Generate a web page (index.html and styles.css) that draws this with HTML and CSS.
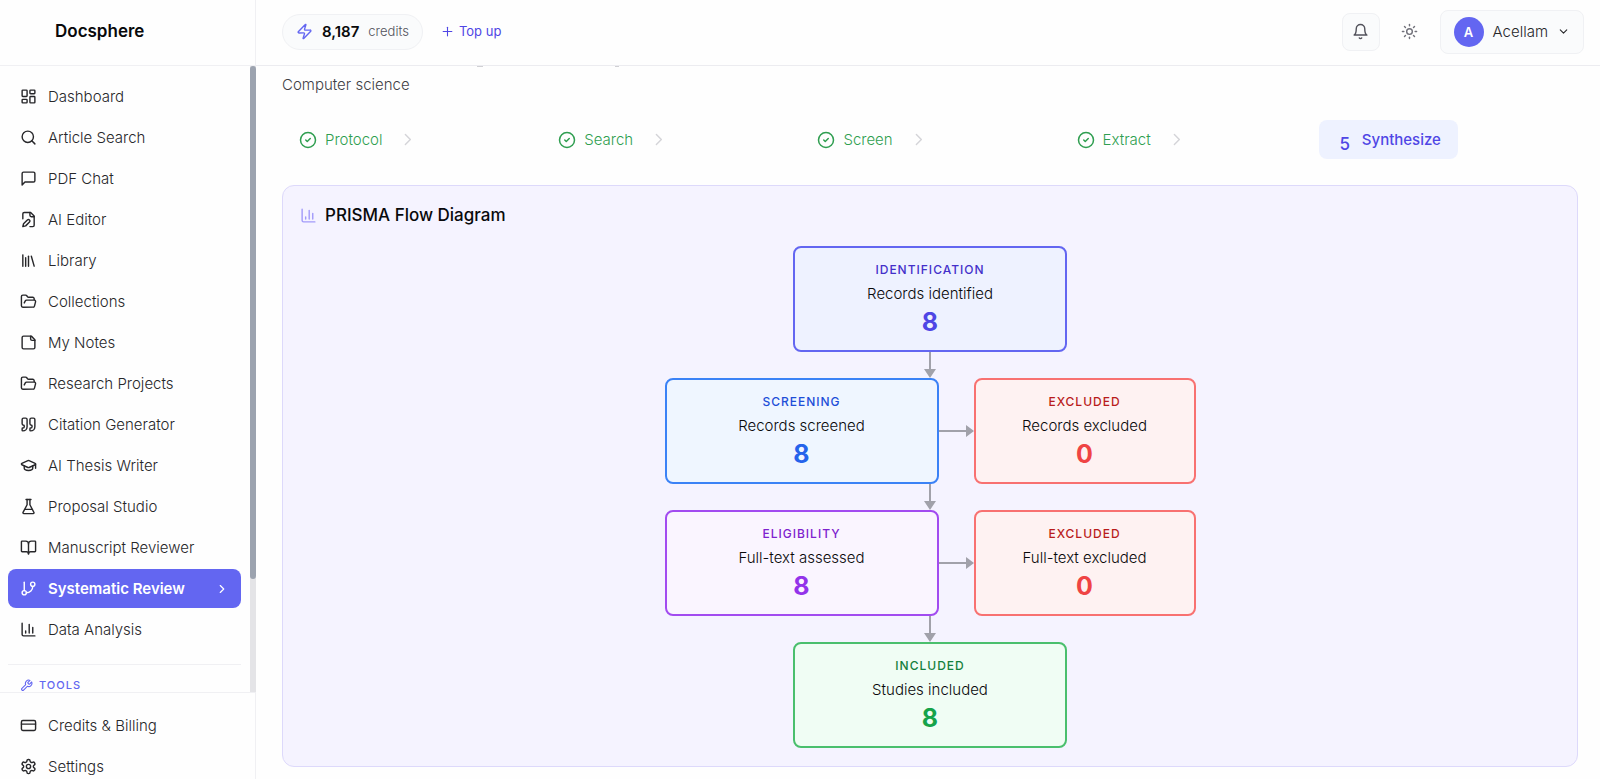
FILE: index.html
```html
<!DOCTYPE html>
<html lang="en">
<head>
<meta charset="utf-8">
<meta name="viewport" content="width=device-width, initial-scale=1">
<title>Docsphere</title>
<link rel="stylesheet" href="styles.css">
</head>
<body>
<div class="app">
  <aside class="sidebar">
    <div class="brand"><a href="#">Docsphere</a></div>
    <div class="nav-wrap">
      <nav class="nav" aria-label="Main">
        <a class="nav-item" href="#"><svg class="icon" viewBox="0 0 24 24"><rect width="7" height="9" x="3" y="3" rx="1"/><rect width="7" height="5" x="14" y="3" rx="1"/><rect width="7" height="9" x="14" y="12" rx="1"/><rect width="7" height="5" x="3" y="16" rx="1"/></svg>Dashboard</a>
        <a class="nav-item" href="#"><svg class="icon" viewBox="0 0 24 24"><circle cx="11" cy="11" r="8"/><path d="m21 21-4.300-4.300"/></svg>Article Search</a>
        <a class="nav-item" href="#"><svg class="icon" viewBox="0 0 24 24"><path d="M21 15a2 2 0 0 1-2 2H7l-4 4V5a2 2 0 0 1 2-2h14a2 2 0 0 1 2 2z"/></svg>PDF Chat</a>
        <a class="nav-item" href="#"><svg class="icon" viewBox="0 0 24 24"><path d="M4 11V4a2 2 0 0 1 2-2h9l5 5v13a2 2 0 0 1-2 2h-4"/><path d="M14 2v4a2 2 0 0 0 2 2h4"/><path d="M10.400 12.600a2 2 0 1 1 3 3L8 21l-4 1 1-4Z"/></svg>AI Editor</a>
        <a class="nav-item" href="#"><svg class="icon" viewBox="0 0 24 24"><path d="m16 6 4 14"/><path d="M12 6v14"/><path d="M8 8v12"/><path d="M4 4v16"/></svg>Library</a>
        <a class="nav-item" href="#"><svg class="icon" viewBox="0 0 24 24"><path d="m6 14 1.500-2.900A2 2 0 0 1 9.240 10H20a2 2 0 0 1 1.940 2.500l-1.540 6a2 2 0 0 1-1.950 1.500H4a2 2 0 0 1-2-2V5a2 2 0 0 1 2-2h3.900a2 2 0 0 1 1.690.900l.810 1.200a2 2 0 0 0 1.670.900H18a2 2 0 0 1 2 2v2"/></svg>Collections</a>
        <a class="nav-item" href="#"><svg class="icon" viewBox="0 0 24 24"><path d="M16 3H5a2 2 0 0 0-2 2v14a2 2 0 0 0 2 2h14a2 2 0 0 0 2-2V8Z"/><path d="M15 3v4a2 2 0 0 0 2 2h4"/></svg>My Notes</a>
        <a class="nav-item" href="#"><svg class="icon" viewBox="0 0 24 24"><path d="m6 14 1.500-2.900A2 2 0 0 1 9.240 10H20a2 2 0 0 1 1.940 2.500l-1.540 6a2 2 0 0 1-1.950 1.500H4a2 2 0 0 1-2-2V5a2 2 0 0 1 2-2h3.900a2 2 0 0 1 1.690.900l.810 1.200a2 2 0 0 0 1.670.900H18a2 2 0 0 1 2 2v2"/></svg>Research Projects</a>
        <a class="nav-item" href="#"><svg class="icon" viewBox="0 0 24 24"><path d="M16 3a2 2 0 0 0-2 2v6a2 2 0 0 0 2 2 1 1 0 0 1 1 1v1a2 2 0 0 1-2 2 1 1 0 0 0-1 1v2a1 1 0 0 0 1 1 6 6 0 0 0 6-6V5a2 2 0 0 0-2-2z"/><path d="M5 3a2 2 0 0 0-2 2v6a2 2 0 0 0 2 2 1 1 0 0 1 1 1v1a2 2 0 0 1-2 2 1 1 0 0 0-1 1v2a1 1 0 0 0 1 1 6 6 0 0 0 6-6V5a2 2 0 0 0-2-2z"/></svg>Citation Generator</a>
        <a class="nav-item" href="#"><svg class="icon" viewBox="0 0 24 24"><path d="M21.420 10.922a1 1 0 0 0-.019-1.838L12.830 5.180a2 2 0 0 0-1.660 0L2.600 9.080a1 1 0 0 0 0 1.832l8.570 3.908a2 2 0 0 0 1.660 0z"/><path d="M22 10v6"/><path d="M6 12.500V16a6 3 0 0 0 12 0v-3.500"/></svg>AI Thesis Writer</a>
        <a class="nav-item" href="#"><svg class="icon" viewBox="0 0 24 24"><path d="M10 2v7.500L4.300 20.400A1.100 1.100 0 0 0 5.300 22h13.400a1.100 1.100 0 0 0 1-1.600L14 9.500V2"/><path d="M8.500 2h7"/><path d="M7 16h10"/></svg>Proposal Studio</a>
        <a class="nav-item" href="#"><svg class="icon" viewBox="0 0 24 24"><path d="M12 7v14"/><path d="M3 18a1 1 0 0 1-1-1V4a1 1 0 0 1 1-1h5a4 4 0 0 1 4 4 4 4 0 0 1 4-4h5a1 1 0 0 1 1 1v13a1 1 0 0 1-1 1h-6a3 3 0 0 0-3 3 3 3 0 0 0-3-3z"/></svg>Manuscript Reviewer</a>
        <a class="nav-item active" href="#" aria-current="page"><svg class="icon" viewBox="0 0 24 24"><path d="M6 3v12"/><circle cx="18" cy="6" r="3"/><circle cx="6" cy="18" r="3"/><path d="M18 9a9 9 0 0 1-9 9"/></svg>Systematic Review<svg class="icon icon-sm end" viewBox="0 0 24 24"><path d="m9 18 6-6-6-6"/></svg></a>
        <a class="nav-item" href="#"><svg class="icon" viewBox="0 0 24 24"><path d="M3 3v16a2 2 0 0 0 2 2h16"/><path d="M18 17V9"/><path d="M13 17V5"/><path d="M8 17v-3"/></svg>Data Analysis</a>
        <div class="nav-section"><svg class="icon icon-xs" viewBox="0 0 24 24"><path d="M14.700 6.300a1 1 0 0 0 0 1.400l1.600 1.600a1 1 0 0 0 1.400 0l3.770-3.770a6 6 0 0 1-7.940 7.940l-6.910 6.910a2.120 2.120 0 0 1-3-3l6.910-6.910a6 6 0 0 1 7.940-7.940z"/></svg>TOOLS</div>
      </nav>
      <div class="scroll-track"><div class="scroll-thumb"></div></div>
    </div>
    <div class="side-foot">
      <a class="nav-item" href="#"><svg class="icon" viewBox="0 0 24 24"><rect width="20" height="14" x="2" y="5" rx="2"/><path d="M2 10h20"/></svg>Credits &amp; Billing</a>
      <a class="nav-item" href="#"><svg class="icon" viewBox="0 0 24 24"><path d="M12.220 2h-.440a2 2 0 0 0-2 2v.180a2 2 0 0 1-1 1.730l-.430.250a2 2 0 0 1-2 0l-.150-.080a2 2 0 0 0-2.730.730l-.220.380a2 2 0 0 0 .730 2.730l.150.100a2 2 0 0 1 1 1.720v.510a2 2 0 0 1-1 1.740l-.150.090a2 2 0 0 0-.730 2.730l.220.380a2 2 0 0 0 2.730.730l.150-.080a2 2 0 0 1 2 0l.430.250a2 2 0 0 1 1 1.730V20a2 2 0 0 0 2 2h.440a2 2 0 0 0 2-2v-.180a2 2 0 0 1 1-1.730l.430-.250a2 2 0 0 1 2 0l.150.080a2 2 0 0 0 2.730-.730l.220-.390a2 2 0 0 0-.730-2.730l-.150-.080a2 2 0 0 1-1-1.740v-.500a2 2 0 0 1 1-1.740l.150-.090a2 2 0 0 0 .730-2.730l-.220-.380a2 2 0 0 0-2.730-.730l-.150.080a2 2 0 0 1-2 0l-.430-.250a2 2 0 0 1-1-1.730V4a2 2 0 0 0-2-2z"/><circle cx="12" cy="12" r="3"/></svg>Settings</a>
    </div>
  </aside>

  <div class="page">
    <header class="topbar">
      <div class="credits"><svg class="icon" viewBox="0 0 24 24"><path d="M4 14a1 1 0 0 1-.780-1.630l9.900-10.200a.500.500 0 0 1 .860.460l-1.920 6.020A1 1 0 0 0 13 10h7a1 1 0 0 1 .780 1.630l-9.900 10.200a.500.500 0 0 1-.860-.460l1.920-6.020A1 1 0 0 0 11 14z"/></svg><strong>8,187</strong><span>credits</span></div>
      <a class="topup" href="#"><svg class="icon icon-xs" viewBox="0 0 24 24"><path d="M4 12h16"/><path d="M12 4v16"/></svg>Top up</a>
      <div class="top-actions">
        <button class="icon-btn boxed" type="button" aria-label="Notifications"><svg class="icon" viewBox="0 0 24 24"><path d="M6 8a6 6 0 0 1 12 0c0 7 3 9 3 9H3s3-2 3-9"/><path d="M10.300 21a1.940 1.940 0 0 0 3.400 0"/></svg></button>
        <button class="icon-btn" type="button" aria-label="Toggle theme"><svg class="icon" viewBox="0 0 24 24"><circle cx="12" cy="12" r="4"/><path d="M12 2v2"/><path d="M12 20v2"/><path d="m4.930 4.930 1.410 1.410"/><path d="m17.660 17.660 1.410 1.410"/><path d="M2 12h2"/><path d="M20 12h2"/><path d="m6.340 17.660-1.410 1.410"/><path d="m19.070 4.930-1.410 1.410"/></svg></button>
        <button class="profile" type="button"><span class="avatar">A</span>Acellam<svg class="icon icon-xs" viewBox="0 0 24 24"><path d="m6 9 6 6 6-6"/></svg></button>
      </div>
    </header>

    <main class="content">
      <svg class="title-edge" viewBox="0 0 340 2" aria-hidden="true"><path d="M195 0h6M333 0h4"/></svg>
      <p class="subtitle">Computer science</p>
      <ol class="steps">
        <li><button class="step" type="button"><svg class="icon icon-md" viewBox="0 0 24 24"><circle cx="12" cy="12" r="10"/><path d="m9 12 2 2 4-4"/></svg>Protocol</button><svg class="icon chev" viewBox="0 0 24 24"><path d="m9 19 7-7-7-7"/></svg></li>
        <li><button class="step" type="button"><svg class="icon icon-md" viewBox="0 0 24 24"><circle cx="12" cy="12" r="10"/><path d="m9 12 2 2 4-4"/></svg>Search</button><svg class="icon chev" viewBox="0 0 24 24"><path d="m9 19 7-7-7-7"/></svg></li>
        <li><button class="step" type="button"><svg class="icon icon-md" viewBox="0 0 24 24"><circle cx="12" cy="12" r="10"/><path d="m9 12 2 2 4-4"/></svg>Screen</button><svg class="icon chev" viewBox="0 0 24 24"><path d="m9 19 7-7-7-7"/></svg></li>
        <li><button class="step" type="button"><svg class="icon icon-md" viewBox="0 0 24 24"><circle cx="12" cy="12" r="10"/><path d="m9 12 2 2 4-4"/></svg>Extract</button><svg class="icon chev" viewBox="0 0 24 24"><path d="m9 19 7-7-7-7"/></svg></li>
        <li><button class="step current" type="button" aria-current="step"><span class="num">5</span>Synthesize</button></li>
      </ol>

      <section class="panel">
        <h2 class="panel-title"><svg class="icon" viewBox="0 0 24 24"><path d="M3 3v16a2 2 0 0 0 2 2h16"/><path d="M18 17V9"/><path d="M13 17V5"/><path d="M8 17v-3"/></svg>PRISMA Flow Diagram</h2>
        <div class="flow">
          <div class="box indigo"><h3>IDENTIFICATION</h3><p>Records identified</p><strong>8</strong></div>
          <svg class="down" viewBox="0 0 12 26"><path d="M5 0h2v17h5l-6 9-6-9h5z"/></svg>
          <div class="flow-row">
            <div class="box blue"><h3>SCREENING</h3><p>Records screened</p><strong>8</strong></div>
            <svg class="across" viewBox="0 0 35 12"><path d="M0 5h27V0l8 6-8 6V7H0z"/></svg>
            <div class="box red"><h3>EXCLUDED</h3><p>Records excluded</p><strong>0</strong></div>
          </div>
          <svg class="down" viewBox="0 0 12 26"><path d="M5 0h2v17h5l-6 9-6-9h5z"/></svg>
          <div class="flow-row">
            <div class="box purple"><h3>ELIGIBILITY</h3><p>Full-text assessed</p><strong>8</strong></div>
            <svg class="across" viewBox="0 0 35 12"><path d="M0 5h27V0l8 6-8 6V7H0z"/></svg>
            <div class="box red"><h3>EXCLUDED</h3><p>Full-text excluded</p><strong>0</strong></div>
          </div>
          <svg class="down" viewBox="0 0 12 26"><path d="M5 0h2v17h5l-6 9-6-9h5z"/></svg>
          <div class="box green"><h3>INCLUDED</h3><p>Studies included</p><strong>8</strong></div>
        </div>
      </section>
    </main>
  </div>
</div>
</body>
</html>
```
FILE: styles.css
```css
* { box-sizing: border-box; }

body {
  margin: 0;
  overflow: hidden;
  background: #fefefe;
  color: #09090b;
  font-family: Inter, "Liberation Sans", sans-serif;
  font-size: 15px;
  font-weight: 300;
  line-height: 19px;
}

a { color: inherit; text-decoration: none; }
button { font: inherit; border: 0; background: none; color: inherit; cursor: pointer; }
h2, h3, p, ol { margin: 0; padding: 0; }

.icon {
  flex: none;
  width: 17px;
  height: 17px;
  fill: none;
  stroke: currentColor;
  stroke-width: 2;
  stroke-linecap: round;
  stroke-linejoin: round;
}
.icon-md { width: 18px; height: 18px; }
.icon-sm { width: 14px; height: 14px; }
.icon-xs { width: 13px; height: 13px; }

.app { display: flex; height: 100vh; }

/* Sidebar */
.sidebar {
  display: flex;
  flex: none;
  flex-direction: column;
  width: 256px;
}
.brand {
  flex: none;
  height: 66px;
  padding: 22px 0 0 55px;
  border-bottom: 1px solid #f0f0f3;
  border-right: 1px solid #f0f0f3;
  font-size: 17px;
  font-weight: 600;
}
.nav-wrap { display: flex; flex: 1; min-height: 0; }
.nav {
  display: flex;
  flex: 1;
  flex-direction: column;
  gap: 2px;
  padding: 11px 9px 0 8px;
  overflow: hidden;
}
.nav-item {
  display: flex;
  flex: none;
  align-items: center;
  gap: 11px;
  height: 39px;
  padding: 0 12px;
  border-radius: 8px;
  color: #27272a;
}
.nav-item.active { background: #6366f1; color: #fff; font-weight: 600; }
.end { margin-left: auto; }
.nav-section {
  display: flex;
  flex: none;
  align-items: center;
  gap: 6px;
  margin-top: 13px;
  padding: 11px 12px 0;
  border-top: 1px solid #f0f0f3;
  color: #6366f1;
  font-size: 11px;
  font-weight: 500;
  letter-spacing: 1px;
}
.scroll-track { width: 6px; background: #e4e4e7; }
.scroll-thumb { height: 82%; border-radius: 3px; background: #9ca3af; }
.side-foot {
  display: flex;
  flex: none;
  flex-direction: column;
  gap: 2px;
  height: 87px;
  padding: 13px 8px 0;
  overflow: hidden;
  border-top: 1px solid #f0f0f3;
  border-right: 1px solid #f0f0f3;
}

/* Top bar */
.page { display: flex; flex: 1; flex-direction: column; min-width: 0; }
.topbar {
  display: flex;
  flex: none;
  align-items: center;
  height: 66px;
  padding: 0 16px 2px 26px;
  border-bottom: 1px solid #ececf0;
}
.credits {
  display: flex;
  align-items: center;
  gap: 9px;
  height: 36px;
  padding: 0 13px;
  border: 1px solid #f0f1f4;
  border-radius: 18px;
  background: #fafbfc;
}
.credits .icon { color: #6366f1; }
.credits strong { font-weight: 600; }
.credits span { color: #52525b; font-size: 13px; }
.topup {
  display: flex;
  align-items: center;
  gap: 5px;
  margin-left: 18px;
  color: #4f46e5;
  font-size: 13px;
  font-weight: 400;
}
.top-actions { display: flex; align-items: center; gap: 11px; margin-left: auto; }
.icon-btn {
  display: flex;
  align-items: center;
  justify-content: center;
  width: 38px;
  height: 38px;
  padding: 0;
  border-radius: 8px;
  color: #71717a;
}
.icon-btn.boxed { border: 1px solid #f0f1f4; background: #fafbfc; color: #52525b; }
.profile {
  display: flex;
  align-items: center;
  gap: 9px;
  height: 44px;
  padding: 0 13px;
  border: 1px solid #f0f1f4;
  border-radius: 8px;
  background: #fafbfc;
  color: #27272a;
}
.avatar {
  width: 30px;
  border-radius: 50%;
  background: #6366f1;
  color: #fff;
  font-size: 13px;
  font-weight: 600;
  line-height: 30px;
  text-align: center;
}

/* Content */
.content { flex: 1; padding: 0 22px 13px 26px; }
.title-edge { display: block; width: 340px; height: 2px; fill: none; stroke: #a1a1aa; stroke-width: 1; }
.subtitle { padding: 7px 0 26px; color: #3f3f46; }
.steps { display: flex; list-style: none; }
.steps li { display: flex; flex: 1; align-items: center; }
.step {
  display: flex;
  align-items: center;
  gap: 8px;
  padding: 10px 17px;
  border-radius: 8px;
  color: #2f9e50;
}
.step.current { background: #eef2ff; color: #4f46e5; font-weight: 500; }
.num { width: 18px; height: 18px; font-size: 17px; line-height: 26px; text-align: center; }
.chev { color: #d4d4d8; }

.panel {
  margin-top: 26px;
  padding: 17px 17px 18px;
  border: 1px solid #ddd9fb;
  border-radius: 12px;
  background: #f5f3ff;
}
.panel-title {
  display: flex;
  align-items: center;
  gap: 8px;
  margin-bottom: 18px;
  font-size: 17px;
  font-weight: 500;
  line-height: 25px;
}
.panel-title .icon { color: #a29bfa; }

/* Flow diagram */
.flow { display: flex; flex-direction: column; align-items: center; }
.flow-row { display: flex; align-items: center; }
.box {
  width: 274px;
  padding: 12px 16px 14px;
  border: 2px solid;
  border-radius: 8px;
  text-align: center;
}
.box h3 { font-size: 12px; font-weight: 500; line-height: 20px; letter-spacing: 1px; }
.box p { line-height: 28px; }
.box strong { display: block; font-size: 25px; font-weight: 700; line-height: 28px; }
.down { width: 12px; height: 26px; fill: #a1a1aa; }
.across { width: 35px; height: 12px; fill: #a1a1aa; }

.indigo { border-color: #6366f1; background: #eef2ff; }
.indigo h3 { color: #4330ca; }
.indigo strong { color: #4f46e5; }
.blue { border-color: #3b82f6; background: #eff6ff; }
.blue h3 { color: #1d4ed8; }
.blue strong { color: #2563eb; }
.purple { border-color: #a24bf0; background: #faf5ff; }
.purple h3 { color: #7e22ce; }
.purple strong { color: #9333ea; }
.red { width: 222px; border-color: #f87171; background: #fef2f2; }
.red h3 { color: #b91c1c; }
.red strong { color: #ef4444; }
.green { border-color: #4abf6d; background: #f0fdf4; }
.green h3 { color: #15803d; }
.green strong { color: #16a34a; }
```
